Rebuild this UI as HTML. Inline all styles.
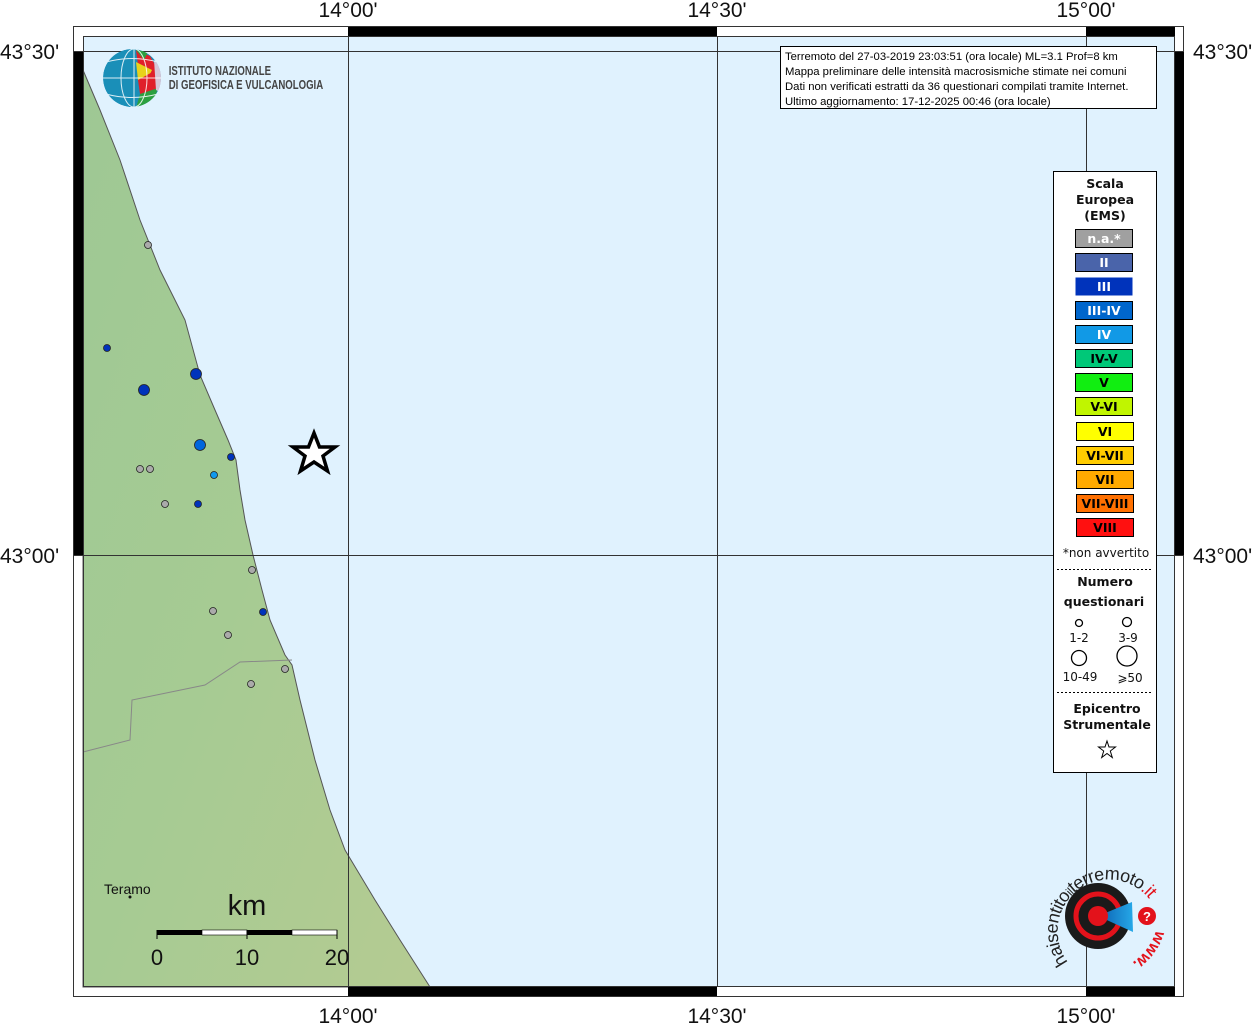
<!DOCTYPE html>
<html><head><meta charset="utf-8"><style>
html,body{margin:0;padding:0;background:#fff;width:1257px;height:1024px;overflow:hidden;font-family:"Liberation Sans",sans-serif}
</style></head><body>
<svg width="1257" height="1024" viewBox="0 0 1257 1024" xmlns="http://www.w3.org/2000/svg" font-family="Liberation Sans, sans-serif">
<defs>
<linearGradient id="land" x1="0" y1="0" x2="1" y2="1">
<stop offset="0" stop-color="#9ec894"/><stop offset="0.5" stop-color="#a6cb93"/><stop offset="1" stop-color="#b5cb92"/>
</linearGradient>
<linearGradient id="cone" x1="0" y1="0" x2="1" y2="0"><stop offset="0" stop-color="#0a5fb0"/><stop offset="1" stop-color="#26a8e8"/></linearGradient>
<clipPath id="globe"><circle cx="132" cy="78" r="29"/></clipPath>
</defs>
<rect x="83" y="36" width="1092" height="951" fill="#e0f2fe"/>
<path d="M83,70 L100,110 L120,160 L140,220 L160,270 L185,320 L200,375 L215,410 L228,440 L236,460 L240,490 L245,520 L253,555 L262,590 L270,620 L285,655 L292,665 L300,700 L315,760 L330,810 L345,850 L360,875 L375,900 L400,940 L430,987 L83,987 Z" fill="url(#land)" stroke="#555" stroke-width="1"/>
<path d="M83,752 L130,740 L132,700 L205,685 L240,662 L292,660" fill="none" stroke="#888" stroke-width="1"/>
<g stroke="#333" stroke-width="1">
<line x1="348.5" y1="36" x2="348.5" y2="987"/><line x1="717.5" y1="36" x2="717.5" y2="987"/><line x1="1086.5" y1="36" x2="1086.5" y2="987"/>
<line x1="83" y1="51.5" x2="1175" y2="51.5"/><line x1="83" y1="555.5" x2="1175" y2="555.5"/>
</g>
<rect x="73.5" y="26.5" width="1110" height="970" fill="none" stroke="#333"/>
<rect x="83.5" y="36.5" width="1091" height="950" fill="none" stroke="#333"/>
<rect x="348" y="27" width="369" height="9" fill="#000"/><rect x="1086" y="27" width="89" height="9" fill="#000"/>
<rect x="348" y="987" width="369" height="9" fill="#000"/><rect x="1086" y="987" width="89" height="9" fill="#000"/>
<rect x="74" y="51" width="9" height="504" fill="#000"/><rect x="1175" y="51" width="9" height="504" fill="#000"/>
<g stroke="#333"><line x1="74" y1="51.5" x2="83" y2="51.5"/><line x1="1175" y1="51.5" x2="1184" y2="51.5"/><line x1="74" y1="555.5" x2="83" y2="555.5"/><line x1="1175" y1="555.5" x2="1184" y2="555.5"/></g>
<g font-size="21" fill="#111">
<text x="348" y="17" text-anchor="middle">14°00'</text><text x="717" y="17" text-anchor="middle">14°30'</text><text x="1086" y="17" text-anchor="middle">15°00'</text>
<text x="348" y="1023" text-anchor="middle">14°00'</text><text x="717" y="1023" text-anchor="middle">14°30'</text><text x="1086" y="1023" text-anchor="middle">15°00'</text>
<text x="0" y="59">43°30'</text><text x="0" y="563">43°00'</text>
<text x="1193" y="59">43°30'</text><text x="1193" y="563">43°00'</text>
</g>
<g stroke="#222" stroke-width="0.8">
<circle cx="148" cy="245" r="3.5" fill="#aaa"/>
<circle cx="107" cy="348" r="3.5" fill="#0033bb"/>
<circle cx="196" cy="374" r="5.5" fill="#0033bb"/>
<circle cx="144" cy="390" r="5.5" fill="#0033bb"/>
<circle cx="200" cy="445" r="5.5" fill="#0066dd"/>
<circle cx="231" cy="457" r="3.5" fill="#0033bb"/>
<circle cx="140" cy="469" r="3.5" fill="#aaa"/><circle cx="150" cy="469" r="3.5" fill="#aaa"/>
<circle cx="214" cy="475" r="3.5" fill="#1199ee"/>
<circle cx="165" cy="504" r="3.5" fill="#aaa"/><circle cx="198" cy="504" r="3.5" fill="#0033bb"/>
<circle cx="252" cy="570" r="3.5" fill="#aaa"/><circle cx="213" cy="611" r="3.5" fill="#aaa"/>
<circle cx="263" cy="612" r="3.5" fill="#0033bb"/><circle cx="228" cy="635" r="3.5" fill="#aaa"/>
<circle cx="285" cy="669" r="3.5" fill="#aaa"/><circle cx="251" cy="684" r="3.5" fill="#aaa"/>
</g>
<polygon points="314,433 319.5,447 335,447 323,456 327.5,471 314,462 300.5,471 305,456 293,447 308.5,447" fill="#fff" stroke="#000" stroke-width="3.5"/>
<text x="104" y="894" font-size="14" fill="#111">Teramo</text><circle cx="130" cy="897" r="1.5" fill="#111"/>
<text x="247" y="915" font-size="29" text-anchor="middle" fill="#111">km</text>
<rect x="157" y="930" width="45" height="5" fill="#000"/><rect x="202" y="930" width="45" height="5" fill="#fff" stroke="#000" stroke-width="0.6"/>
<rect x="247" y="930" width="45" height="5" fill="#000"/><rect x="292" y="930" width="45" height="5" fill="#fff" stroke="#000" stroke-width="0.6"/>
<g stroke="#000"><line x1="157" y1="930" x2="157" y2="939"/><line x1="247" y1="930" x2="247" y2="939"/><line x1="337" y1="930" x2="337" y2="939"/></g>
<g font-size="22" fill="#111" text-anchor="middle"><text x="157" y="965">0</text><text x="247" y="965">10</text><text x="337" y="965">20</text></g>
<g clip-path="url(#globe)">
<circle cx="132" cy="78" r="29" fill="#1a8fb8"/>
<path d="M136,50 L150,56 L158,70 L140,80 Z" fill="#e0202a"/>
<path d="M136,50 L148,52 L144,60 Z" fill="#2ca040"/>
<path d="M136,62 L152,70 L146,82 L138,80 Z" fill="#e8d21a"/>
<path d="M138,80 L156,70 L158,90 L140,94 Z" fill="#e0202a"/>
<path d="M140,94 L158,88 L152,106 L136,108 Z" fill="#2ca040"/>
<path d="M154,60 L165,70 L165,95 L156,90 Z" fill="#d6c7d8"/>
<g stroke="#fff" stroke-width="1" fill="none" opacity="0.85"><ellipse cx="134" cy="78" rx="13" ry="29"/><line x1="103" y1="78" x2="161" y2="78"/><path d="M106,62 Q132,55 158,62"/><path d="M106,94 Q132,101 158,94"/><line x1="134" y1="49" x2="134" y2="107"/></g>
</g>
<g font-size="13" fill="#444" font-weight="bold" transform="scale(0.74,1)"><text x="228" y="75">ISTITUTO NAZIONALE</text><text x="228" y="89">DI GEOFISICA E VULCANOLOGIA</text></g>
<rect x="780.5" y="46.5" width="376" height="62" fill="#fff" stroke="#000"/>
<g font-size="11.3" fill="#000"><text x="785" y="60">Terremoto del 27-03-2019 23:03:51 (ora locale) ML=3.1 Prof=8 km</text>
<text x="785" y="75">Mappa preliminare delle intensità macrosismiche stimate nei comuni</text>
<text x="785" y="90">Dati non verificati estratti da 36 questionari compilati tramite Internet.</text>
<text x="785" y="105">Ultimo aggiornamento: 17-12-2025 00:46 (ora locale)</text></g>
<rect x="1053.5" y="171.5" width="103" height="601" fill="#fff" stroke="#000"/>
<g font-family="DejaVu Sans, sans-serif" font-size="12.5" font-weight="bold" text-anchor="middle" fill="#111">
<text x="1105" y="188">Scala</text><text x="1105" y="204">Europea</text><text x="1105" y="220">(EMS)</text>
</g>
<g stroke="#000" stroke-width="1">
<rect x="1075.5" y="229.5" width="57" height="18" fill="#a0a0a0"/>
<rect x="1075.5" y="253.5" width="57" height="18" fill="#4a64aa"/>
<rect x="1075.5" y="277.5" width="57" height="18" fill="#0033bb" stroke="none"/>
<rect x="1075.5" y="301.5" width="57" height="18" fill="#0066cc"/>
<rect x="1075.5" y="325.5" width="57" height="18" fill="#1199e6"/>
<rect x="1075.5" y="349.5" width="57" height="18" fill="#00c878"/>
<rect x="1075.5" y="373.5" width="57" height="18" fill="#11ee11"/>
<rect x="1075.5" y="397.5" width="57" height="18" fill="#c0f500"/>
<rect x="1076.5" y="422.5" width="57" height="18" fill="#ffff00"/>
<rect x="1076.5" y="446.5" width="57" height="18" fill="#ffcc00"/>
<rect x="1076.5" y="470.5" width="57" height="18" fill="#ffaa00"/>
<rect x="1076.5" y="494.5" width="57" height="18" fill="#ff7000"/>
<rect x="1076.5" y="518.5" width="57" height="18" fill="#ff1010"/>
</g>
<g font-family="DejaVu Sans, sans-serif" font-size="12.5" font-weight="bold" text-anchor="middle">
<text x="1104" y="243" fill="#fff">n.a.*</text><text x="1104" y="267" fill="#fff">II</text><text x="1104" y="291" fill="#fff">III</text>
<text x="1104" y="315" fill="#fff">III-IV</text><text x="1104" y="339" fill="#fff">IV</text><text x="1104" y="363" fill="#000">IV-V</text>
<text x="1104" y="387" fill="#000">V</text><text x="1104" y="411" fill="#000">V-VI</text><text x="1105" y="436" fill="#000">VI</text>
<text x="1105" y="460" fill="#000">VI-VII</text><text x="1105" y="484" fill="#000">VII</text><text x="1105" y="508" fill="#000">VII-VIII</text><text x="1105" y="532" fill="#000">VIII</text>
</g>
<g font-family="DejaVu Sans, sans-serif" fill="#111" text-anchor="middle">
<text x="1106" y="557" font-size="12">*non avvertito</text>
<line x1="1057" y1="569.5" x2="1153" y2="569.5" stroke="#000" stroke-dasharray="2,2"/>
<text x="1105" y="586" font-size="12.5" font-weight="bold">Numero</text>
<text x="1104" y="606" font-size="12.5" font-weight="bold">questionari</text>
<circle cx="1079" cy="623" r="3.5" fill="#fff" stroke="#000" stroke-width="1.3"/>
<circle cx="1127" cy="622" r="4.5" fill="#fff" stroke="#000" stroke-width="1.3"/>
<text x="1079" y="642" font-size="12">1-2</text><text x="1128" y="642" font-size="12">3-9</text>
<circle cx="1079" cy="658" r="7.5" fill="#fff" stroke="#000" stroke-width="1.3"/>
<circle cx="1127" cy="656" r="10" fill="#fff" stroke="#000" stroke-width="1.3"/>
<text x="1080" y="681" font-size="12">10-49</text><text x="1130" y="682" font-size="12">⩾50</text>
<line x1="1057" y1="692.5" x2="1153" y2="692.5" stroke="#000" stroke-dasharray="2,2"/>
<text x="1107" y="713" font-size="12.5" font-weight="bold">Epicentro</text>
<text x="1107" y="729" font-size="12.5" font-weight="bold">Strumentale</text>
<polygon points="1107,741 1109,747 1115.5,747 1110.3,751 1112.3,757.5 1107,753.5 1101.7,757.5 1103.7,751 1098.5,747 1105,747" fill="#fff" stroke="#000" stroke-width="1"/>
</g>
<circle cx="1098" cy="916" r="33" fill="#1a1a1a"/>
<circle cx="1098" cy="916" r="22" fill="none" stroke="#e3121b" stroke-width="5"/>
<path d="M1098,916 L1132,902 L1133,932 Z" fill="url(#cone)"/>
<circle cx="1098" cy="916" r="10" fill="#e3121b"/>
<circle cx="1147" cy="916" r="9" fill="#e3121b"/><text x="1147" y="921" font-size="13" fill="#fff" text-anchor="middle" font-weight="bold">?</text>
<path id="arc" d="M1068,962 A45,45 0 1 1 1150,900" fill="none"/>
<text font-size="18" fill="#222" letter-spacing="-0.6"><textPath href="#arc">haisentito<tspan font-size="12">il</tspan>terremoto<tspan fill="#e3121b">.it</tspan></textPath></text>
<path id="arc2" d="M1156,930 A58,58 0 0 1 1100,972" fill="none"/>
<text font-size="16" fill="#e3121b" font-weight="bold"><textPath href="#arc2">www.</textPath></text>
</svg>
</body></html>
